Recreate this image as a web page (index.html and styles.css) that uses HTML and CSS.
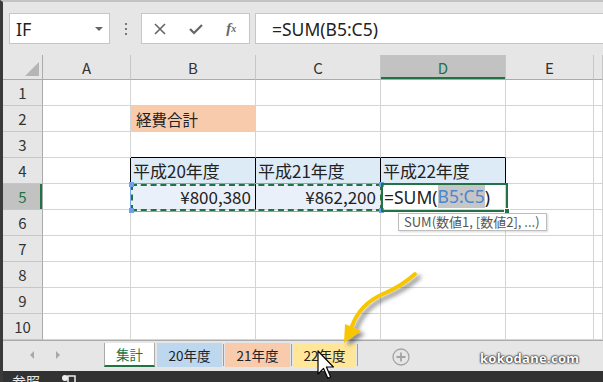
FILE: index.html
```html
<!DOCTYPE html>
<html>
  <head>
    <meta charset="utf-8">
    <link rel="stylesheet" href="styles.css">
  </head>
  <body>
    <div class="app">
      <div class="formula-bar">
        <div class="name-box">
          <span class="name">IF</span>
          <span class="drop"></span>
        </div>
        <div class="grip"><i></i><i></i><i></i></div>
        <div class="fx-box">
          <span class="fx-btn">
            <svg width="12" height="12" viewBox="0 0 12 12"><path d="M1 1L11 11M11 1L1 11" stroke="#666" stroke-width="1.6" fill="none"/></svg>
          </span>
          <span class="fx-btn">
            <svg width="14" height="12" viewBox="0 0 14 12"><path d="M1 6L5 10L13 2" stroke="#666" stroke-width="2.2" fill="none"/></svg>
          </span>
          <span class="fx-btn fx">f<sub>x</sub></span>
        </div>
        <div class="formula">=SUM(B5:C5)</div>
      </div>

      <div class="sheet">
        <div class="corner"></div>
        <div class="col-head">A</div>
        <div class="col-head">B</div>
        <div class="col-head">C</div>
        <div class="col-head sel">D</div>
        <div class="col-head">E</div>
        <div class="col-head"></div>

        <div class="row-head">1</div>
        <div class="cell"></div><div class="cell"></div><div class="cell"></div><div class="cell"></div><div class="cell"></div><div class="cell"></div>

        <div class="row-head">2</div>
        <div class="cell"></div>
        <div class="cell orange">経費合計</div>
        <div class="cell"></div><div class="cell"></div><div class="cell"></div><div class="cell"></div>

        <div class="row-head">3</div>
        <div class="cell"></div>
        <div class="cell line-below"></div>
        <div class="cell line-below"></div>
        <div class="cell line-below"></div>
        <div class="cell"></div><div class="cell"></div>

        <div class="row-head">4</div>
        <div class="cell line-right"></div>
        <div class="cell title">平成20年度</div>
        <div class="cell title">平成21年度</div>
        <div class="cell title">平成22年度</div>
        <div class="cell"></div><div class="cell"></div>

        <div class="row-head sel">5</div>
        <div class="cell"></div>
        <div class="cell amount line-right">¥800,380</div>
        <div class="cell amount">¥862,200</div>
        <div class="cell editing">=SUM(<span class="ref">B5:C5</span>)</div>
        <div class="cell"></div><div class="cell"></div>

        <div class="row-head">6</div>
        <div class="cell"></div><div class="cell"></div><div class="cell"></div><div class="cell"></div><div class="cell"></div><div class="cell"></div>
        <div class="row-head">7</div>
        <div class="cell"></div><div class="cell"></div><div class="cell"></div><div class="cell"></div><div class="cell"></div><div class="cell"></div>
        <div class="row-head">8</div>
        <div class="cell"></div><div class="cell"></div><div class="cell"></div><div class="cell"></div><div class="cell"></div><div class="cell"></div>
        <div class="row-head">9</div>
        <div class="cell"></div><div class="cell"></div><div class="cell"></div><div class="cell"></div><div class="cell"></div><div class="cell"></div>
        <div class="row-head">10</div>
        <div class="cell"></div><div class="cell"></div><div class="cell"></div><div class="cell"></div><div class="cell"></div><div class="cell"></div>
      </div>

      <div class="tab-bar">
        <div class="tab-nav">
          <span class="nav-left"></span>
          <span class="nav-right"></span>
        </div>
        <div class="tab active">集計</div>
        <div class="tab blue">20年度</div>
        <span class="tab-sep"></span>
        <div class="tab orange">21年度</div>
        <span class="tab-sep"></span>
        <div class="tab yellow">22年度</div>
        <span class="tab-sep"></span>
        <div class="add-sheet">
          <svg width="18" height="18" viewBox="0 0 18 18"><circle cx="9" cy="9" r="8" stroke="#a3a3a3" stroke-width="1.3" fill="none"/><path d="M9 4.5V13.5M4.5 9H13.5" stroke="#a3a3a3" stroke-width="1.8"/></svg>
        </div>
      </div>

      <div class="status-bar">
        <span class="mode">参照</span>
        <svg class="macro" width="14" height="10" viewBox="0 0 14 10"><circle cx="3" cy="4" r="3" fill="#eee"/><rect x="6" y="2" width="7" height="8" fill="none" stroke="#eee" stroke-width="1.5"/></svg>
      </div>
    </div>

    <div class="range">
      <i class="knob tl"></i><i class="knob bl"></i><i class="knob tr"></i><i class="knob br"></i>
    </div>
    <div class="edit-box"><i class="handle"></i></div>
    <div class="tip">SUM(数値1, [数値2], ...)</div>
    <div class="watermark">kokodane.com</div>

    <svg class="pointer-art" width="603" height="382" viewBox="0 0 603 382">
      <defs>
        <filter id="shade" x="-50%" y="-50%" width="200%" height="200%">
          <feDropShadow dx="4" dy="3" stdDeviation="2" flood-color="#000" flood-opacity="0.45"/>
        </filter>
      </defs>
      <g filter="url(#shade)">
        <path d="M415 274C405 283 395 289 383 294C369 300 358 310 352 326" stroke="#f7c600" stroke-width="4" fill="none" stroke-linecap="round"/>
        <polygon points="344,343 345,324 361,331" fill="#f7c600"/>
      </g>
      <polygon points="318,351 318,374 323.6,368.4 327.8,378.2 330.6,376.8 326.4,367 333.4,367" fill="#fff" stroke="#000" stroke-width="1.2" stroke-linejoin="round"/>
    </svg>
  </body>
</html>
```

FILE: styles.css
```css
* {
  box-sizing: border-box;
}

body {
  position: relative;
  margin: 0;
  width: 603px;
  height: 382px;
  overflow: hidden;
  background: #e6e6e6;
  font-family: "Noto Sans CJK JP", "Noto Sans", sans-serif;
  color: #222;
}

.app {
  display: flex;
  flex-direction: column;
  height: 382px;
  border-left: 3px solid #3a3a3a;
  border-top: 2px solid #c3c3c3;
  background: #e6e6e6;
}

/* formula bar */

.formula-bar {
  display: flex;
  align-items: flex-start;
  height: 53px;
  padding: 11px 0 0 6px;
}

.name-box {
  display: flex;
  align-items: center;
  width: 101px;
  height: 31px;
  padding-left: 6px;
  background: #fff;
  border: 1px solid #c6c6c6;
  font-family: "Noto Sans", sans-serif;
  font-size: 18px;
}

.drop {
  margin-left: auto;
  margin-right: 6px;
  border-left: 4px solid transparent;
  border-right: 4px solid transparent;
  border-top: 4px solid #666;
}

.grip {
  display: flex;
  flex-direction: column;
  align-items: center;
  justify-content: center;
  gap: 3px;
  width: 31px;
  height: 31px;
}

.grip i {
  width: 2px;
  height: 2px;
  background: #777;
}

.fx-box {
  display: flex;
  align-items: center;
  width: 109px;
  height: 31px;
  background: #fff;
  border: 1px solid #c6c6c6;
}

.fx-btn {
  display: flex;
  align-items: center;
  justify-content: center;
  width: 36px;
  height: 29px;
}

.fx {
  font-family: "Liberation Serif", serif;
  font-style: italic;
  font-weight: bold;
  font-size: 15px;
  color: #666;
}

.fx sub {
  font-size: 10px;
  vertical-align: -1px;
}

.formula {
  flex: 1;
  display: flex;
  align-items: center;
  height: 31px;
  margin-left: 5px;
  padding-left: 16px;
  background: #fff;
  border: 1px solid #c6c6c6;
  border-right: none;
  font-family: "Noto Sans", sans-serif;
  font-size: 17.5px;
}

/* grid */

.sheet {
  display: grid;
  grid-template-columns: 40px 88px 125px 125px 125px 88px 1fr;
  grid-template-rows: 25px repeat(10, 26px);
  height: 285px;
}

.corner {
  position: relative;
  border-right: 1px solid #ababab;
  border-bottom: 1px solid #ababab;
}

.corner::after {
  content: "";
  position: absolute;
  right: 3px;
  bottom: 3px;
  border-left: 14px solid transparent;
  border-bottom: 14px solid #b5b5b5;
}

.col-head {
  display: flex;
  align-items: center;
  justify-content: center;
  border-right: 1px solid #c6c6c6;
  border-bottom: 1px solid #ababab;
  font-size: 15px;
  color: #333;
}

.row-head {
  display: flex;
  align-items: center;
  justify-content: center;
  border-right: 1px solid #ababab;
  border-bottom: 1px solid #c6c6c6;
  font-size: 15px;
  color: #333;
}

.col-head.sel {
  background: #c2c2c2;
  color: #217346;
  box-shadow: inset 0 -2px 0 #217346;
}

.row-head.sel {
  background: #c2c2c2;
  color: #217346;
  box-shadow: inset -2px 0 0 #217346;
}

.cell {
  display: flex;
  align-items: center;
  padding: 0 3px;
  background: #fff;
  border-right: 1px solid #d4d4d4;
  border-bottom: 1px solid #d4d4d4;
  font-size: 17px;
  white-space: nowrap;
  overflow: hidden;
}

.cell.orange {
  padding-left: 5px;
  background: #f8cbad;
  font-size: 15.5px;
}

.cell.line-below {
  border-bottom-color: #000;
}

.cell.line-right {
  border-right-color: #000;
}

.cell.title {
  padding-left: 2px;
  background: #ddebf7;
  border-right-color: #000;
  border-bottom-color: #000;
}

.cell.amount {
  justify-content: flex-end;
  padding-right: 4px;
  background: #e9f0fa;
}

.cell.editing {
  padding-left: 3px;
  font-family: "Noto Sans", sans-serif;
  font-size: 17.5px;
}

.ref {
  display: inline-block;
  height: 23px;
  line-height: 23px;
  background: #c6c6c6;
  color: #4a86d0;
}

/* sheet tabs */

.tab-bar {
  display: flex;
  align-items: flex-start;
  height: 31px;
  padding-top: 2px;
  border-top: 1px solid #ababab;
}

.tab-nav {
  display: flex;
  align-items: center;
  gap: 22px;
  width: 101px;
  height: 24px;
  padding-left: 27px;
}

.nav-left {
  border-top: 4px solid transparent;
  border-bottom: 4px solid transparent;
  border-right: 4px solid #a8a8a8;
}

.nav-right {
  border-top: 4px solid transparent;
  border-bottom: 4px solid transparent;
  border-left: 4px solid #a8a8a8;
}

.tab {
  display: flex;
  align-items: center;
  justify-content: center;
  height: 24px;
  width: 65px;
  font-size: 13.5px;
  color: #222;
}

.tab.active {
  width: 51px;
  margin-right: 2px;
  background: #fff;
  border-left: 1px solid #ababab;
  border-right: 1px solid #ababab;
  border-bottom: 2px solid #217346;
  color: #217346;
}

.tab.blue {
  background: #bdd7ee;
}

.tab.orange {
  background: #f8cbad;
}

.tab.yellow {
  width: 63px;
  background: #ffe699;
}

.tab-sep {
  width: 1px;
  height: 22px;
  margin: 1px 1px 0;
  background: #9e9e9e;
}

.add-sheet {
  display: flex;
  align-items: center;
  height: 28px;
  margin-left: 33px;
}

.status-bar {
  display: flex;
  align-items: flex-start;
  gap: 22px;
  height: 11px;
  padding-left: 9px;
  background: #323232;
  overflow: hidden;
}

.mode {
  margin-top: 1px;
  font-size: 14px;
  line-height: 18px;
  color: #e8e8e8;
}

.macro {
  margin-top: 3px;
}

/* overlays */

.range {
  position: absolute;
  left: 131px;
  top: 184px;
  width: 251px;
  height: 27px;
  border: 2px dashed #217346;
  box-shadow: 0 0 0 1px #7aa3e6;
}

.knob {
  position: absolute;
  width: 5px;
  height: 5px;
  background: #6d9ef0;
}

.knob.tl { left: -4px; top: -4px; }
.knob.bl { left: -4px; bottom: -4px; }
.knob.tr { right: -4px; top: -4px; }
.knob.br { right: -4px; bottom: -4px; }

.edit-box {
  position: absolute;
  left: 381px;
  top: 183px;
  width: 127px;
  height: 29px;
  border: 2px solid #217346;
}

.handle {
  position: absolute;
  right: -4px;
  bottom: -4px;
  width: 6px;
  height: 6px;
  background: #217346;
  border: 1px solid #fff;
}

.tip {
  position: absolute;
  left: 398px;
  top: 213px;
  width: 149px;
  height: 18px;
  padding-left: 5px;
  background: #fff;
  border: 1px solid #bdbdbd;
  box-shadow: 1px 1px 2px rgba(0, 0, 0, 0.15);
  font-size: 13px;
  line-height: 16px;
  color: #555;
  white-space: nowrap;
}

.watermark {
  position: absolute;
  left: 480px;
  top: 349px;
  font-family: "Noto Sans", sans-serif;
  font-weight: bold;
  font-size: 13px;
  letter-spacing: 0.3px;
  color: #fff;
  text-shadow: 0 0 2px #000, 0 0 2px #000;
}

.pointer-art {
  position: absolute;
  left: 0;
  top: 0;
  pointer-events: none;
}
```
